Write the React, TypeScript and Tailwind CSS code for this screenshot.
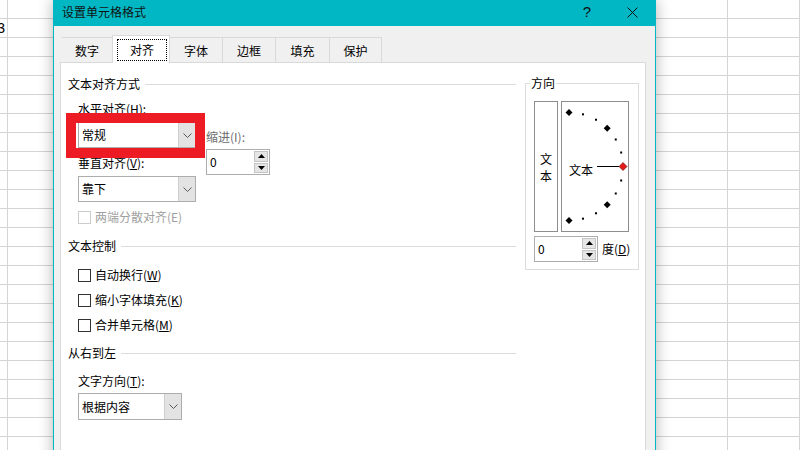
import React from 'react'

// background sheet: 24 rows of 19px, first narrow column then 72px columns
const rows = Array.from({ length: 24 }, (_, i) => i)
const cols = Array.from({ length: 11 }, (_, i) => i)

function SheetGrid() {
  return (
    <div className="flex flex-col">
      {rows.map((r) => (
        <div key={r} className="flex h-[19px] shrink-0 border-b border-[#d4d4d4]">
          <div className="flex w-[8px] shrink-0 items-center justify-end border-r border-[#d4d4d4] pr-[2px] font-['Liberation_Sans',sans-serif] text-[14px] leading-none text-black">
            {r === 1 ? '3' : ''}
          </div>
          {cols.map((c) => (
            <div key={c} className="w-[72px] shrink-0 border-r border-[#d4d4d4]" />
          ))}
        </div>
      ))}
    </div>
  )
}

function Chevron() {
  return (
    <svg width="9" height="5" viewBox="0 0 9 5">
      <polyline points="0.5,0.5 4.5,4.5 8.5,0.5" fill="none" stroke="#5a5a5a" strokeWidth="1" />
    </svg>
  )
}

function Select({ value, className }: { value: string; className: string }) {
  return (
    <div className={`flex border border-[#adadad] bg-white ${className}`}>
      <div className="flex flex-1 items-center pl-[3px]">{value}</div>
      <div className="flex w-[17px] items-center justify-center border-l border-[#cfcfcf] bg-[#e3e3e3]">
        <Chevron />
      </div>
    </div>
  )
}

function Spinner() {
  return (
    <div className="flex h-[26px] w-[64px] border border-[#adadad] bg-white">
      <div className="flex flex-1 items-center pl-[3px]">0</div>
      <div className="flex w-[16px] flex-col gap-[1px] p-[1px]">
        <div className="flex flex-1 items-center justify-center border border-[#c4c4c4] bg-[#e5e5e5]">
          <svg width="7" height="4" viewBox="0 0 7 4">
            <polygon points="0,4 3.5,0 7,4" fill="#000" />
          </svg>
        </div>
        <div className="flex flex-1 items-center justify-center border border-[#c4c4c4] bg-[#e5e5e5]">
          <svg width="7" height="4" viewBox="0 0 7 4">
            <polygon points="0,0 7,0 3.5,4" fill="#000" />
          </svg>
        </div>
      </div>
    </div>
  )
}

function SectionHeader({ title, className = '' }: { title: string; className?: string }) {
  return (
    <div className={`flex h-[16px] items-center ${className}`}>
      <span>{title}</span>
      <div className="ml-[5px] h-px flex-1 bg-[#dcdcdc]" />
    </div>
  )
}

function Check({ children, disabled = false, className = '' }: { children: React.ReactNode; disabled?: boolean; className?: string }) {
  return (
    <div className={`flex h-[16px] items-center pl-[10px] ${className}`}>
      <span
        className={`h-[13px] w-[13px] shrink-0 border bg-white ${disabled ? 'border-[#cccccc]' : 'border-[#333333]'}`}
      />
      <span className={`ml-[4px] ${disabled ? 'text-[#a0a0a0]' : ''}`}>{children}</span>
    </div>
  )
}

// dots and diamonds of the orientation dial; centre (7, 64.5), radius 54
const bigMarks = [90, 45, -45, -90]
const smallMarks = [75, 60, 30, 15, -15, -30, -60, -75]
const cx = 7
const cy = 64.5
const rad = 54

function Dial() {
  const pt = (deg: number) => {
    const a = (deg * Math.PI) / 180
    return [cx + rad * Math.cos(a), cy - rad * Math.sin(a)]
  }
  return (
    <svg className="absolute inset-0" width="66" height="129" viewBox="0 0 66 129">
      {bigMarks.map((d) => {
        const [x, y] = pt(d)
        return (
          <polygon
            key={d}
            points={`${x},${y - 3.5} ${x + 3.5},${y} ${x},${y + 3.5} ${x - 3.5},${y}`}
            fill="#000"
          />
        )
      })}
      {smallMarks.map((d) => {
        const [x, y] = pt(d)
        return <rect key={d} x={x - 1} y={y - 1} width="2" height="2" fill="#000" />
      })}
      <line x1="35" y1="64.5" x2="57" y2="64.5" stroke="#000" strokeWidth="1" />
      <polygon points="61,60.5 65,64.5 61,68.5 57,64.5" fill="#e21b1b" stroke="#5a0000" strokeWidth="0.6" />
    </svg>
  )
}

const tabs = [
  { label: '数字', w: 'ml-[2px] w-[51px]' },
  { label: '对齐', w: 'w-[58px]', active: true },
  { label: '字体', w: 'w-[53px]' },
  { label: '边框', w: 'w-[53px]' },
  { label: '填充', w: 'w-[54px]' },
  { label: '保护', w: 'w-[52px]' },
]

export default function App() {
  return (
    <div className="relative h-[450px] w-[800px] overflow-hidden bg-white font-['Noto_Sans_CJK_SC','Noto_Sans',sans-serif] text-[12px] leading-[16px] text-black">
      <SheetGrid />

      {/* dialog window over the sheet */}
      <div className="absolute left-[53px] top-0 flex h-[480px] w-[603px] flex-col border-x border-[#00b7c3] bg-[#f0f0f0] shadow-[0_0_14px_rgba(0,0,0,0.3)]">
        <div className="flex h-[26px] shrink-0 items-center bg-[#00b7c3] pb-[2px]">
          <span className="flex-1 pl-[8px] text-[12px] text-[#111]">设置单元格格式</span>
          <span className="flex w-[46px] justify-center pl-[2px] font-['Liberation_Sans',sans-serif] text-[15px] text-[#111]">?</span>
          <span className="flex w-[46px] justify-center">
            <svg width="11" height="11" viewBox="0 0 11 11">
              <line x1="0.5" y1="0.5" x2="10.5" y2="10.5" stroke="#111" strokeWidth="1" />
              <line x1="10.5" y1="0.5" x2="0.5" y2="10.5" stroke="#111" strokeWidth="1" />
            </svg>
          </span>
        </div>

        <div className="flex flex-1 flex-col pl-[6px] pr-[9px] pt-[9px]">
          <div className="flex h-[27px] items-end">
            {tabs.map((t) =>
              t.active ? (
                <div
                  key={t.label}
                  className={`relative z-10 -mb-px -ml-px flex h-[28px] items-start border-x border-t border-[#d9d9d9] bg-white pl-[4px] pr-[2px] pt-[3px] ${t.w}`}
                >
                  <span className="flex h-[22px] w-full items-center justify-center border border-dotted border-black">
                    {t.label}
                  </span>
                </div>
              ) : (
                <div
                  key={t.label}
                  className={`flex h-[25px] items-center justify-center border-r border-t border-[#d9d9d9] pt-[2px] ${t.w}`}
                >
                  {t.label}
                </div>
              )
            )}
          </div>

          <div className="flex flex-1 border border-[#d9d9d9] bg-white pl-[7px] pt-[13px]">
            <div className="flex w-[448px] flex-col">
              <SectionHeader title="文本对齐方式" />
              <div className="mt-[9px] flex pl-[10px]">
                <div className="flex w-[118px] flex-col">
                  <span>
                    水平对齐(<u>H</u>):
                  </span>
                  <Select value="常规" className="mt-[5px] h-[26px] w-[118px]" />
                  <span className="mt-[7px]">
                    垂直对齐(<u>V</u>):
                  </span>
                  <Select value="靠下" className="mt-[5px] h-[26px] w-[118px]" />
                </div>
                <div className="ml-[10px] mt-[28px] flex flex-col">
                  <span className="text-[#6d6d6d]">缩进(I):</span>
                  <div className="mt-[4px]">
                    <Spinner />
                  </div>
                </div>
              </div>
              <Check disabled className="mt-[7px]">
                两端分散对齐(E)
              </Check>

              <SectionHeader title="文本控制" className="mt-[13px]" />
              <Check className="mt-[13px]">
                自动换行(<u>W</u>)
              </Check>
              <Check className="mt-[9px]">
                缩小字体填充(<u>K</u>)
              </Check>
              <Check className="mt-[9px]">
                合并单元格(<u>M</u>)
              </Check>

              <SectionHeader title="从右到左" className="mt-[12px]" />
              <span className="mt-[12px] pl-[10px]">
                文字方向(<u>T</u>):
              </span>
              <div className="mt-[4px] pl-[10px]">
                <Select value="根据内容" className="h-[27px] w-[104px]" />
              </div>
            </div>

            {/* orientation group */}
            <div className="relative ml-[9px] mt-[7px] h-[187px] w-[114px] border border-[#dcdcdc] pl-[8px] pt-[17px]">
              <span className="absolute -top-[9px] left-[4px] bg-white px-px">方向</span>
              <div className="flex gap-[3px]">
                <div className="flex h-[131px] w-[24px] flex-col items-center justify-center border border-[#8e8e8e] leading-[17px]">
                  <span>文</span>
                  <span>本</span>
                </div>
                <div className="relative flex h-[131px] w-[68px] items-center border border-[#8e8e8e] pl-[7px] pt-[6px]">
                  <Dial />
                  <span className="relative">文本</span>
                </div>
              </div>
              <div className="mt-[4px] flex items-center">
                <Spinner />
                <span className="ml-[4px]">
                  度(<u>D</u>)
                </span>
              </div>
            </div>
          </div>
        </div>
      </div>

      {/* red highlight drawn over the horizontal alignment select */}
      <div className="absolute left-[66px] top-[113px] h-[45px] w-[139px] border-[10px] border-[#ed1c24]" />
    </div>
  )
}
